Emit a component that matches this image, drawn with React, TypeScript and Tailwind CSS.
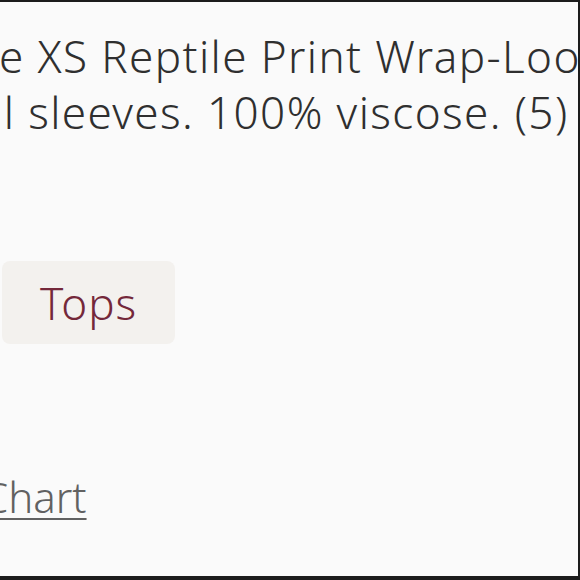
import React from 'react';

const App: React.FC = () => {
  return (
    <div className="w-[580px] h-[580px] overflow-hidden bg-[#fafafa] border-t-2 border-b-4 border-r-2 border-[#1c1c1c] font-['Noto_Sans',sans-serif] font-light">
      <div className="pt-[26px] text-[44px] leading-[56px] tracking-[1.4px] text-[#2f2f2f] whitespace-nowrap">
        <div className="ml-[-1px]">e XS Reptile Print Wrap-Look Top</div>
        <div className="ml-[-8px]">ll sleeves. 100% viscose. (5)</div>
      </div>

      <div className="mt-[121px] ml-[2px]">
        <span className="inline-flex items-center h-[83px] px-[38px] rounded-lg bg-[#f3f1ee] text-[44px] tracking-[1px] text-[#74283a]">
          Tops
        </span>
      </div>

      <div className="mt-[128px] ml-[-18px] whitespace-nowrap">
        <a className="text-[42px] leading-[50px] text-[#616161] underline decoration-2 underline-offset-[5px]">
          Chart
        </a>
      </div>
    </div>
  );
};

export default App;
